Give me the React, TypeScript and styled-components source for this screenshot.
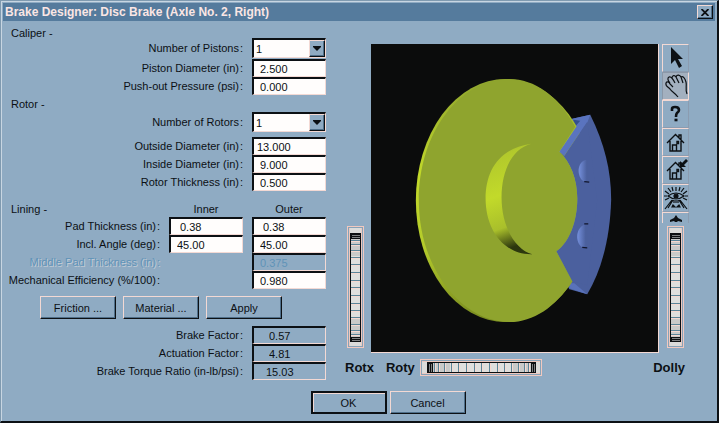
import React, { useId, useState } from "react";
import styled, { createGlobalStyle, css } from "styled-components";

const color = {
  face: "#8fabc3",
  title: "#557b9d",
  ink: "#0c1014",
  light: "#f3d9d4",
  paper: "#fffdfc",
  shade: "#4f6f8a",
  muted: "#5f93b8",
};

const GlobalStyle = createGlobalStyle`
  * { box-sizing: border-box; }
  body {
    margin: 0;
    background: ${color.face};
    color: ${color.ink};
    font: 11px/14px "Liberation Sans", Arial, sans-serif;
  }
  button, input, select { font: inherit; color: inherit; margin: 0; }
`;

const Dialog = styled.div`
  display: flex;
  flex-direction: column;
  min-height: 100vh;
  background: ${color.face};
  border: 1px solid #7f9ab0;
  border-right: 2px solid ${color.ink};
  border-bottom: 2px solid ${color.ink};
  box-shadow: inset 1px 1px 0 #c8d6e2;
  padding: 2px;
`;

const TitleBar = styled.header`
  display: flex;
  align-items: center;
  justify-content: space-between;
  height: 18px;
  padding: 0 2px;
  background: ${color.title};
`;

const Title = styled.h1`
  margin: 0;
  font-size: 12px;
  line-height: 18px;
  font-weight: bold;
  color: #fbe6e4;
`;

const raised = css`
  border: 1px solid;
  border-color: ${color.light} ${color.ink} ${color.ink} ${color.light};
  box-shadow: inset -1px -1px 0 ${color.shade};
  background: ${color.face};
`;

const CloseButton = styled.button`
  ${raised}
  display: grid;
  place-items: center;
  width: 16px;
  height: 14px;
  padding: 0;
`;

const Body = styled.main`
  display: flex;
  flex: 1;
  gap: 21px;
  padding: 4px 26px 0 8px;
`;

const Form = styled.form`
  flex: 0 0 315px;
  display: flex;
  flex-direction: column;
`;

const Section = styled.section`
  display: flex;
  flex-direction: column;
`;

const Row = styled.div<{ $columns?: number; $gapAfter?: number }>`
  display: grid;
  grid-template-columns: minmax(0, 1fr) repeat(${(p) => p.$columns ?? 1}, 74px);
  column-gap: 9px;
  align-items: center;
  margin-bottom: ${(p) => p.$gapAfter ?? 0}px;
`;

const SectionHead = styled.div<{ $height: number }>`
  display: grid;
  grid-template-columns: 1fr 74px 74px;
  column-gap: 9px;
  align-items: end;
  height: ${(p) => p.$height}px;
`;

const SectionTitle = styled.h2`
  margin: 0;
  font-size: 11px;
  line-height: 16px;
  font-weight: normal;
`;

const ColumnTitle = styled.span`
  text-align: center;
  line-height: 16px;
`;

const Label = styled.label<{ $off?: boolean }>`
  display: flex;
  justify-content: flex-end;
  gap: 1px;
  white-space: nowrap;
  ${(p) => p.$off && css`color: ${color.muted}; text-shadow: 1px 1px 0 #c3cbd6;`}
`;

const sunken = css`
  border: solid;
  border-width: 2px 1px 1px 2px;
  border-color: ${color.ink} ${color.light} ${color.light} ${color.ink};
  border-radius: 0;
`;

const Field = styled.input<{ $flat?: boolean; $indent?: number }>`
  ${sunken}
  width: 100%;
  height: 18px;
  padding: 0 0 0 ${(p) => p.$indent ?? 6}px;
  background: ${(p) => (p.$flat ? color.face : color.paper)};
  &:disabled { color: ${color.muted}; }
`;

const SelectBox = styled.div`
  position: relative;
  height: 20px;
`;

const Select = styled.select`
  ${sunken}
  appearance: none;
  width: 100%;
  height: 20px;
  padding: 0 2px;
  background: ${color.paper};
`;

const SelectArrow = styled.span`
  ${raised}
  position: absolute;
  top: 2px;
  right: 1px;
  bottom: 1px;
  width: 16px;
  display: grid;
  place-items: center;
  pointer-events: none;
`;

const Actions = styled.div`
  display: flex;
  gap: 7px;
  padding: 7px 0 7px 29px;
`;

const Button = styled.button<{ $primary?: boolean }>`
  ${raised}
  width: 76px;
  height: 23px;
  padding: 0;
  ${(p) => p.$primary && css`border: 2px solid ${color.ink}; box-shadow: inset 1px 1px 0 ${color.light};`}
`;

const Footer = styled.footer`
  display: flex;
  justify-content: center;
  gap: 3px;
  padding: 9px 0 5px 58px;
`;

const Viewer = styled.section`
  flex: 1;
  min-width: 0;
  display: grid;
  grid-template-columns: 17px 1fr 27px;
  grid-template-rows: 1fr auto;
  column-gap: 7px;
  padding-top: 19px;
`;

const SideWheel = styled.div`
  display: flex;
  align-items: flex-end;
  padding-bottom: 5px;
`;

const Canvas = styled.div`
  display: grid;
  margin-right: -4px;
  min-height: 300px;
  background: #0b0c0c;
  border: solid ${color.light};
  border-width: 0 1px 1px 0;
`;

const Scene = styled.svg`
  width: 100%;
  height: 100%;
`;

const ToolColumn = styled.div`
  display: flex;
  flex-direction: column;
  justify-content: space-between;
  align-items: center;
  padding-bottom: 5px;
`;

const Tools = styled.div`
  display: flex;
  flex-direction: column;
  width: 27px;
  height: 179px;
  overflow: hidden;
`;

const ToolButton = styled.button<{ $active?: boolean }>`
  flex: 0 0 28px;
  padding: 0;
  display: grid;
  place-items: center;
  background: ${(p) => (p.$active ? "#a3b0bf" : color.face)};
  border: 1px solid;
  border-color: ${(p) =>
    p.$active ? "#8b98a8 #f3d9d4 #f3d9d4 #8b98a8" : "#f3d9d4 #8b9cb0 #8b9cb0 #f3d9d4"};
`;

const WheelLabels = styled.div`
  grid-column: 1 / -1;
  display: flex;
  align-items: center;
  gap: 12px;
  height: 29px;
  margin: 0 4px 0 -2px;
`;

const WheelGroup = styled.div`
  display: flex;
  align-items: center;
  gap: 5px;
`;

const WheelLabel = styled.label<{ $end?: boolean }>`
  font-size: 13px;
  line-height: 16px;
  font-weight: bold;
  margin-left: ${(p) => (p.$end ? "auto" : "0")};
`;

const WheelBox = styled.div<{ $vertical?: boolean }>`
  position: relative;
  flex: none;
  width: ${(p) => (p.$vertical ? 17 : 122)}px;
  height: ${(p) => (p.$vertical ? 122 : 17)}px;
  svg { display: block; }
`;

const WheelInput = styled.input<{ $vertical?: boolean }>`
  position: absolute;
  inset: 0;
  width: 100%;
  height: 100%;
  opacity: 0;
  ${(p) => p.$vertical && css`writing-mode: vertical-lr;`}
`;

const ticks = [14, 18, 24, 31, 38, 46, 54, 61, 69, 77, 84, 91, 98, 104, 108];

function Wheel({ id, vertical }: { id: string; vertical?: boolean }) {
  return (
    <WheelBox $vertical={vertical}>
      <svg
        width={vertical ? 17 : 122}
        height={vertical ? 122 : 17}
        viewBox={vertical ? "0 0 17 122" : "0 0 122 17"}
        shapeRendering="crispEdges"
        aria-hidden="true"
      >
        <g transform={vertical ? "matrix(0 1 1 0 0 0)" : undefined}>
          <rect x="0" y="0" width="122" height="17" fill="#f1c9c0" />
          <rect x="1" y="1" width="120" height="15" fill="#87a3b8" />
          <rect x="2" y="2" width="118" height="13" fill="#ecc8bf" />
          <rect x="2" y="3" width="5" height="11" fill="#dcdcda" />
          <rect x="115" y="3" width="5" height="11" fill="#dcdcda" />
          <rect x="7" y="3" width="109" height="11" fill="#0c0e10" />
          <rect x="13" y="4" width="98" height="9" fill="#c9cac9" />
          <rect x="30" y="4" width="62" height="9" fill="#dfdfdd" />
          {ticks.map((x) => (
            <g key={x}>
              <rect x={x} y="4" width="1" height="9" fill="#5a8599" />
              <rect x={x + 1} y="4" width="1" height="9" fill="#f6d8cf" />
            </g>
          ))}
          <path d="M9.500 5v8M11.500 5v8M112.500 5v8M114.500 5v8" stroke="#7d7f80" />
        </g>
      </svg>
      <WheelInput id={id} type="range" $vertical={vertical} />
    </WheelBox>
  );
}

const house = (
  <path
    d="M3 13 11.500 4.500 20 13M6 11v10h11V11M8.500 21v-6h4v6M13 11.500h1.500v2H13zM15 8V5h2v4.500"
    fill="none"
    stroke="#0c1014"
    strokeWidth="1.400"
  />
);

const tools = [
  { name: "Pick", icon: <path d="M7 1v17l4-4 4 8 3-2-4-7h5z" fill="#0c1014" /> },
  {
    name: "Pan",
    active: true,
    icon: (
      <path
        d="M14 23C11 19 8 18 6 15 4 13 1 12 2 9c1-2 3-1 4 1l3 3M6 9C4 7 3 4 5 3c2-1 4 2 6 6M8 4c0-3 3-3 4-1l3 6M12 3c1-3 4-2 5 0l2 6M17 3c2-1 4 1 5 5 1 4-1 7 1 12"
        fill="none"
        stroke="#0c1014"
        strokeWidth="1.2"
      />
    ),
  },
  {
    name: "Help",
    icon: (
      <g fill="none" stroke="#0c1014" strokeWidth="2.600">
        <path d="M8 9V7q0-2 3-2 4 0 4 3 0 2-2 3-1 1-1 4" />
        <path d="M10.500 18h3" />
      </g>
    ),
  },
  { name: "Home", icon: house },
  {
    name: "Set home",
    icon: (
      <g>
        {house}
        <path d="M16 9V3l2 2 4-4 2 2-4 4 2 2z" fill="#0c1014" />
      </g>
    ),
  },
  {
    name: "View all",
    icon: (
      <g fill="none" stroke="#0c1014" strokeWidth="1.200">
        <path d="M4 10q8-6 16 0-8 6-16 0z" />
        <circle cx="12" cy="10" r="2" fill="#0c1014" />
        <path d="M12 1v4M8 1l1 4M16 1l-1 4M4 2l3 4M20 2l-3 4M1 5l4 3M23 5l-4 3M0 10h3M21 10h3M1 14l4-2M23 14l-4-2M1 23l7-9M23 23l-7-9M4 22l5-8M20 22l-5-8M12 14v3M10 14v3M14 14v3" />
        <path d="M8 21l1-2 2 2zM13 21l2-2 1 2z" fill="#0c1014" />
      </g>
    ),
  },
  { name: "Seek", icon: <path d="M12 1l2 3 4 2v2l-4-1-1 1h-2l-1-1-4 1V6l4-2z" fill="#0c1014" /> },
];

function BrakeScene() {
  return (
    <Scene viewBox="371 44 288 307" role="img" aria-label="Disc brake model">
      <defs>
        <linearGradient id="rim" x1="0" y1="0" x2="0" y2="1">
          <stop offset="0" stopColor="#8fa52e" />
          <stop offset="0.400" stopColor="#c3da2a" />
          <stop offset="0.700" stopColor="#b3ca2b" />
          <stop offset="1" stopColor="#76881f" />
        </linearGradient>
        <linearGradient id="hub" x1="0" y1="0" x2="0.150" y2="1">
          <stop offset="0" stopColor="#8a9f2c" />
          <stop offset="0.150" stopColor="#b2c92c" />
          <stop offset="0.500" stopColor="#c2da2a" />
          <stop offset="0.800" stopColor="#a9bf2b" />
          <stop offset="1" stopColor="#2c370e" />
        </linearGradient>
        <linearGradient id="piston" x1="0" y1="0" x2="1" y2="0">
          <stop offset="0" stopColor="#7590dc" />
          <stop offset="0.700" stopColor="#4b609d" />
        </linearGradient>
      </defs>
      <path d="M573 118 591 114C605 142 612 170 612 199 611 236 603 269 588 294L570 289 552 254V145z" fill="#4b609e" />
      <path d="M573 118 591 114 588 122 565 155 556 148z" fill="#5a74bf" />
      <path d="M574 119 581 120 574 128z" fill="#34508c" />
      <path d="M570 288 588 294 575 283 571 283z" fill="#5972ba" />
      <ellipse cx="506" cy="200" rx="90" ry="122" fill="url(#rim)" />
      <path
        d="M576 126C559 95 535 78 510 78 460 78 419 132 419 200S462 322 510 322C534 322 556 307 573 281L557 251C570 242 578 221 578 198 578 178 571 161 560 151z"
        fill="#8fa42e"
      />
      <path d="M577 126 560 151 565 155 588 121z" fill="#5a74bf" />
      <path d="M560 151C571 161 578 178 578 198 578 221 570 242 557 251L573 281 588 285 598 200 588 121 565 155z" fill="#4b609e" />
      <path d="M532 143C500 147 486 170 486 198 486 231 506 255 533 254 515 249 502 225 502 197 502 171 512 148 532 143z" fill="url(#hub)" />
      <path d="M588 159C577 160 577 177 585 181L591 182z" fill="url(#piston)" />
      <path d="M588 223C575 226 576 243 583 247L590 247z" fill="url(#piston)" />
      <path d="M585 181 590 181.500M583 247 588 247.500M585 223.500H589" stroke="#10152c" strokeWidth="1.300" />
    </Scene>
  );
}

function NumberRow(props: {
  label: string;
  values: string[];
  indent?: number;
  disabled?: boolean;
  output?: boolean;
  span?: boolean;
}) {
  const id = useId();
  const { label, values, indent, disabled, output, span } = props;
  return (
    <Row $columns={span ? 2 : values.length}>
      <Label htmlFor={id} $off={disabled}>
        <span>{label}</span>
        <span>:</span>
      </Label>
      {span && values.length === 1 && <span />}
      {values.map((value, i) => (
        <Field
          key={i}
          id={i === 0 ? id : undefined}
          aria-label={i > 0 ? `${label}, outer` : undefined}
          defaultValue={value}
          $indent={indent}
          $flat={disabled || output}
          readOnly={output}
          disabled={disabled}
        />
      ))}
    </Row>
  );
}

function CountRow({ label, gapAfter }: { label: string; gapAfter: number }) {
  const id = useId();
  const [count, setCount] = useState("1");
  return (
    <Row $gapAfter={gapAfter}>
      <Label htmlFor={id}>
        <span>{label}</span>
        <span>:</span>
      </Label>
      <SelectBox>
        <Select id={id} value={count} onChange={(e) => setCount(e.target.value)}>
          <option>1</option>
          <option>2</option>
        </Select>
        <SelectArrow>
          <svg width="8" height="5" viewBox="0 0 8 5" aria-hidden="true">
            <path d="M0 0h8v1L4 5 0 1z" fill={color.ink} />
          </svg>
        </SelectArrow>
      </SelectBox>
    </Row>
  );
}

export default function App() {
  return (
    <>
      <GlobalStyle />
      <Dialog role="dialog" aria-labelledby="dialog-title">
        <TitleBar>
          <Title id="dialog-title">Brake Designer: Disc Brake (Axle No. 2, Right)</Title>
          <CloseButton type="button" aria-label="Close">
            <svg width="8" height="7" viewBox="0 0 8 7" aria-hidden="true">
              <path d="M0.500 0 7.500 7M7.500 0 0.500 7" stroke={color.ink} strokeWidth="1.800" />
            </svg>
          </CloseButton>
        </TitleBar>
        <Body>
          <Form onSubmit={(e) => e.preventDefault()}>
            <Section>
              <SectionHead $height={13}><SectionTitle>Caliper -</SectionTitle></SectionHead>
              <CountRow label="Number of Pistons" gapAfter={1} />
              <NumberRow label="Piston Diameter (in)" values={["2.500"]} />
              <NumberRow label="Push-out Pressure (psi)" values={["0.000"]} />
            </Section>
            <Section>
              <SectionHead $height={17}><SectionTitle>Rotor -</SectionTitle></SectionHead>
              <CountRow label="Number of Rotors" gapAfter={5} />
              <NumberRow label="Outside Diameter (in)" values={["13.000"]} indent={3} />
              <NumberRow label="Inside Diameter (in)" values={["9.000"]} />
              <NumberRow label="Rotor Thickness (in)" values={["0.500"]} />
            </Section>
            <Section>
              <SectionHead $height={26}>
                <SectionTitle>Lining -</SectionTitle>
                <ColumnTitle>Inner</ColumnTitle>
                <ColumnTitle>Outer</ColumnTitle>
              </SectionHead>
              <NumberRow label="Pad Thickness (in)" values={["0.38", "0.38"]} indent={9} />
              <NumberRow label="Incl. Angle (deg)" values={["45.00", "45.00"]} />
              <NumberRow label="Middle Pad Thickness (in)" values={["0.375"]} span disabled />
              <NumberRow label="Mechanical Efficiency (%/100)" values={["0.980"]} span />
            </Section>
            <Actions>
              <Button type="button">Friction ...</Button>
              <Button type="button">Material ...</Button>
              <Button type="submit">Apply</Button>
            </Actions>
            <Section>
              <NumberRow label="Brake Factor" values={["0.57"]} indent={15} output />
              <NumberRow label="Actuation Factor" values={["4.81"]} indent={15} output />
              <NumberRow label="Brake Torque Ratio (in-lb/psi)" values={["15.03"]} indent={12} output />
            </Section>
          </Form>
          <Viewer>
            <SideWheel><Wheel id="rotx" vertical /></SideWheel>
            <Canvas><BrakeScene /></Canvas>
            <ToolColumn>
              <Tools>
                {tools.map((tool) => (
                  <ToolButton key={tool.name} type="button" aria-label={tool.name} $active={tool.active}>
                    <svg width="24" height="24" viewBox="0 0 24 24" aria-hidden="true">{tool.icon}</svg>
                  </ToolButton>
                ))}
              </Tools>
              <Wheel id="dolly" vertical />
            </ToolColumn>
            <WheelLabels>
              <WheelLabel htmlFor="rotx">Rotx</WheelLabel>
              <WheelGroup>
                <WheelLabel htmlFor="roty">Roty</WheelLabel>
                <Wheel id="roty" />
              </WheelGroup>
              <WheelLabel htmlFor="dolly" $end>Dolly</WheelLabel>
            </WheelLabels>
          </Viewer>
        </Body>
        <Footer>
          <Button type="button" $primary>OK</Button>
          <Button type="button">Cancel</Button>
        </Footer>
      </Dialog>
    </>
  );
}
